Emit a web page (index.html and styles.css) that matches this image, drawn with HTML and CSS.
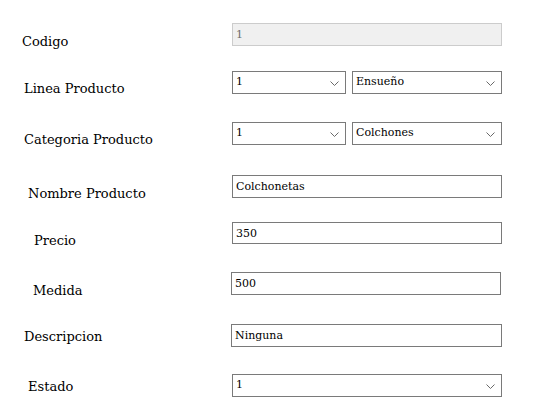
FILE: index.html
```html
<!DOCTYPE html>
<html lang="es">
<head>
<meta charset="utf-8">
<title>Producto</title>
<link rel="stylesheet" href="styles.css">
</head>
<body>
<form class="form">
  <div class="row r-codigo">
    <label class="label">Codigo</label>
    <input class="field field-full" type="text" value="1" disabled>
  </div>
  <div class="row r-linea">
    <label class="label">Linea Producto</label>
    <div class="pair">
      <div class="select select-small"><span class="select-text">1</span><svg class="chev" viewBox="0 0 9 5"><path d="M0.5 0.5 L4.5 4.5 L8.5 0.5" /></svg></div>
      <div class="select select-wide"><span class="select-text">Ensueño</span><svg class="chev" viewBox="0 0 9 5"><path d="M0.5 0.5 L4.5 4.5 L8.5 0.5" /></svg></div>
    </div>
  </div>
  <div class="row r-categoria">
    <label class="label">Categoria Producto</label>
    <div class="pair">
      <div class="select select-small"><span class="select-text">1</span><svg class="chev" viewBox="0 0 9 5"><path d="M0.5 0.5 L4.5 4.5 L8.5 0.5" /></svg></div>
      <div class="select select-wide"><span class="select-text">Colchones</span><svg class="chev" viewBox="0 0 9 5"><path d="M0.5 0.5 L4.5 4.5 L8.5 0.5" /></svg></div>
    </div>
  </div>
  <div class="row r-nombre">
    <label class="label">Nombre Producto</label>
    <input class="field field-full" type="text" value="Colchonetas">
  </div>
  <div class="row r-precio">
    <label class="label">Precio</label>
    <input class="field field-full field-short" type="text" value="350">
  </div>
  <div class="row r-medida">
    <label class="label">Medida</label>
    <input class="field field-full field-shift" type="text" value="500">
  </div>
  <div class="row r-descripcion">
    <label class="label">Descripcion</label>
    <input class="field field-full field-wide" type="text" value="Ninguna">
  </div>
  <div class="row r-estado">
    <label class="label">Estado</label>
    <div class="select select-full"><span class="select-text">1</span><svg class="chev" viewBox="0 0 9 5"><path d="M0.5 0.5 L4.5 4.5 L8.5 0.5" /></svg></div>
  </div>
</form>
</body>
</html>
```

FILE: styles.css
```css
* { box-sizing: border-box; }

html, body {
  margin: 0;
  padding: 0;
  background: #ffffff;
}

body {
  width: 541px;
  height: 420px;
  overflow: hidden;
  font-family: "DejaVu Serif", "Liberation Serif", serif;
  color: #000;
}

.form {
  display: flex;
  flex-direction: column;
  padding-top: 23px;
}

.row {
  display: flex;
  align-items: flex-start;
  height: 23px;
  overflow: visible;
}

.label {
  width: 232px;
  flex: none;
  font-size: 13px;
  line-height: 15px;
  color: #000;
  white-space: nowrap;
}

.field {
  width: 270px;
  height: 23px;
  margin: 0;
  padding: 0 3px;
  border: 1px solid #7a7a7a;
  border-radius: 0;
  background: #fff;
  font-family: "DejaVu Serif", "Liberation Serif", serif;
  font-size: 11px;
  color: #000;
  outline: none;
}

.field:disabled {
  border-color: #cccccc;
  background: #f0f0f0;
  color: #6d6d6d;
}

.field-short { height: 22px; }
.field-shift { margin-left: -1px; }
.field-wide { margin-left: -1px; width: 271px; }

.pair {
  display: flex;
  gap: 6px;
}

.select {
  position: relative;
  height: 23px;
  border: 1px solid #7a7a7a;
  background: #fff;
  display: flex;
  align-items: center;
  padding: 0 3px;
  font-size: 11px;
  line-height: 13px;
}

.select-small { width: 114px; }
.select-wide { width: 150px; }
.select-full { width: 270px; }

.select-text {
  flex: 1;
  margin-top: -2px;
}

.chev {
  position: absolute;
  right: 6px;
  top: 9px;
  width: 9px;
  height: 5px;
  fill: none;
  stroke: #6a6a6a;
  stroke-width: 1;
}

/* per-row vertical rhythm and label placement */
.r-codigo .label { padding-left: 22px; padding-top: 11px; }

.r-linea { margin-top: 25px; }
.r-linea .label { padding-left: 24px; padding-top: 10px; }

.r-categoria { margin-top: 28px; }
.r-categoria .label { padding-left: 24px; padding-top: 10px; }

.r-nombre { margin-top: 30px; }
.r-nombre .label { padding-left: 28px; padding-top: 11px; }

.r-precio { margin-top: 24px; }
.r-precio .label { padding-left: 34px; padding-top: 11px; }

.r-medida { margin-top: 27px; }
.r-medida .label { padding-left: 33px; padding-top: 11px; }

.r-descripcion { margin-top: 29px; }
.r-descripcion .label { padding-left: 24px; padding-top: 5px; }

.r-estado { margin-top: 27px; }
.r-estado .label { padding-left: 28px; padding-top: 5px; }
```
